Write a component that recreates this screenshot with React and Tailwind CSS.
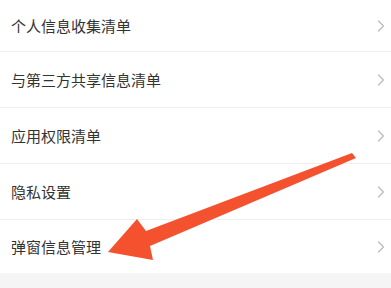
import React from 'react';

const items = [
  { label: '个人信息收集清单', h: 'h-[52px]' },
  { label: '与第三方共享信息清单', h: 'h-[56px]' },
  { label: '应用权限清单', h: 'h-[56px]' },
  { label: '隐私设置', h: 'h-[56px]' },
  { label: '弹窗信息管理', h: 'h-[53px]', last: true },
];

const Chevron = () => (
  <svg width="8" height="12" viewBox="0 0 8 12" className="shrink-0">
    <polyline points="1.5,1 6.5,6 1.5,11" fill="none" stroke="#bdbdbd" strokeWidth="1.3" strokeLinecap="round" strokeLinejoin="round" />
  </svg>
);

export default function App() {
  return (
    <div
      className="relative w-[391px] h-[288px] overflow-hidden bg-[#f5f5f5]"
      style={{ fontFamily: '"Noto Sans CJK SC", "Noto Sans", sans-serif' }}
    >
      <div className="bg-white">
        {items.map((it, i) => (
          <div
            key={i}
            className={`flex items-center justify-between pl-[11px] pr-[6px] ${it.h} ${it.last ? '' : 'border-b border-[#eeeeee]'}`}
          >
            <span className="text-[15px] text-[#333333] leading-none">{it.label}</span>
            <Chevron />
          </div>
        ))}
      </div>

      {/* annotation arrow */}
      <svg className="absolute inset-0 pointer-events-none" width="391" height="288" viewBox="0 0 391 288">
        <polygon
          points="108,252 137,219 146,231 352,153 356,158 150,246 153,260"
          fill="#f4512f"
          strokeLinejoin="round"
        />
      </svg>
    </div>
  );
}
